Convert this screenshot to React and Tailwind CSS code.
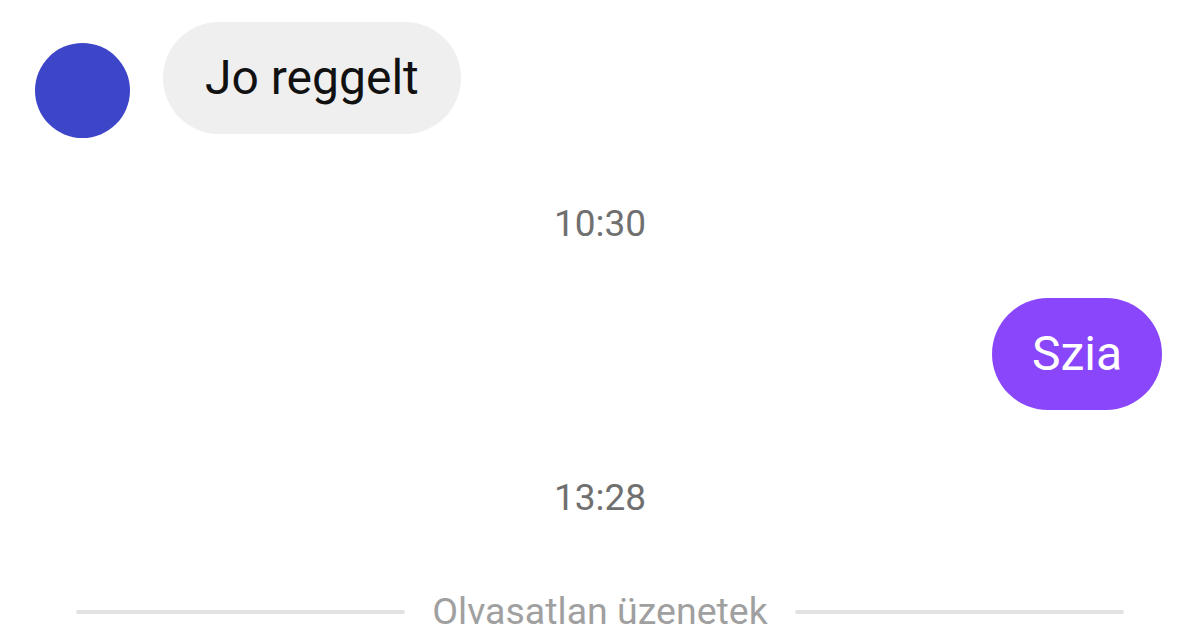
import React from "react";

export default function App() {
  return (
    <div
      className="w-[1200px] h-[630px] bg-white overflow-hidden flex flex-col"
      style={{ fontFamily: "Roboto, 'Noto Sans', sans-serif" }}
    >
      {/* incoming */}
      <div className="flex items-start pl-[35px] pt-[22px]">
        <div className="mt-[21px] w-[95px] h-[95px] rounded-full bg-[#3d45c9] shrink-0" />
        <div className="ml-[33px] h-[112px] px-[42px] rounded-full bg-[#efefef] flex items-center text-[48px] text-[#111]">
          Jo reggelt
        </div>
      </div>

      {/* time */}
      <div className="mt-[64px] h-[44px] flex items-center justify-center text-[37px] text-[#707070]">
        10:30
      </div>

      {/* outgoing */}
      <div className="mt-[52px] flex justify-end pr-[38px]">
        <div className="h-[112px] px-[40px] rounded-full bg-[#8a46fa] flex items-center text-[48px] text-white">
          Szia
        </div>
      </div>

      <div className="mt-[66px] h-[44px] flex items-center justify-center text-[37px] text-[#707070]">
        13:28
      </div>

      {/* unread divider */}
      <div className="mt-[74px] h-[36px] flex items-center px-[76px] gap-[27px]">
        <div className="flex-1 h-[4px] rounded-full bg-[#e2e2e2]" />
        <span className="text-[37.5px] leading-none text-[#a0a0a0]">Olvasatlan üzenetek</span>
        <div className="flex-1 h-[4px] rounded-full bg-[#e2e2e2]" />
      </div>
    </div>
  );
}
